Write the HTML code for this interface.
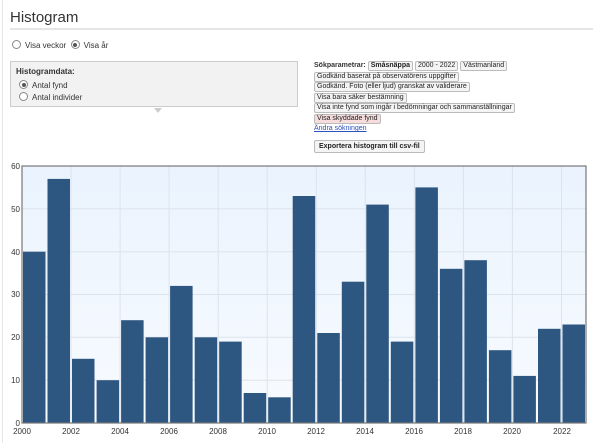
<!DOCTYPE html>
<html><head><meta charset="utf-8"><style>
*{margin:0;padding:0;box-sizing:border-box}
body{width:601px;height:443px;overflow:hidden;background:#fff;font-family:"Liberation Sans",sans-serif;position:relative}
.lb{position:absolute;left:2px;top:0;width:1px;height:443px;background:#e6e6e6}
h1{position:absolute;left:10px;top:9px;font-size:15px;font-weight:normal;color:#333}
.ul{position:absolute;left:10px;top:28px;width:583px;height:2px;background:#e5e5e5}
.rad{display:inline-block;width:9px;height:9px;border:1px solid #888;border-radius:50%;vertical-align:-1px;margin-right:4px;background:#fff;position:relative}
.rad.on::after{content:"";position:absolute;left:1.5px;top:1.5px;width:4px;height:4px;border-radius:50%;background:#555}
.t{position:absolute;font-size:8px;color:#333}
.panel{position:absolute;left:10px;top:61px;width:288px;height:46px;background:#f2f2f2;border:1px solid #ccc}
.tri{position:absolute;left:154px;top:108px;width:0;height:0;border-left:4px solid transparent;border-right:4px solid transparent;border-top:5px solid #ccc}
.btn{display:inline-block;border:1px solid #bbb;border-radius:2px;background:#f4f4f4;font-size:7px;color:#222;padding:0 2px;line-height:8px;height:10px;vertical-align:top}
.row{position:absolute;left:314px;font-size:7px;line-height:10px;height:10px;white-space:nowrap}
</style></head><body>
<div class="lb"></div>
<h1>Histogram</h1>
<div class="ul"></div>
<div class="t" style="left:12px;top:40px"><span class="rad"></span>Visa veckor &nbsp;<span class="rad on"></span>Visa år</div>
<div class="panel">
<div class="t" style="left:5px;top:5px;font-weight:bold">Histogramdata:</div>
<div class="t" style="left:8px;top:18px"><span class="rad on"></span>Antal fynd</div>
<div class="t" style="left:8px;top:30px"><span class="rad"></span>Antal individer</div>
</div>
<div class="tri"></div>
<div class="row" style="top:61px"><span style="font-weight:bold;color:#333">Sökparametrar:</span> <span class="btn" style="font-weight:bold">Småsnäppa</span> <span class="btn">2000 - 2022</span> <span class="btn">Västmanland</span></div>
<div class="row" style="top:71.5px"><span class="btn">Godkänd baserat på observatörens uppgifter</span></div>
<div class="row" style="top:82px"><span class="btn">Godkänd. Foto (eller ljud) granskat av validerare</span></div>
<div class="row" style="top:92.5px"><span class="btn">Visa bara säker bestämning</span></div>
<div class="row" style="top:103px"><span class="btn">Visa inte fynd som ingår i bedömningar och sammanställningar</span></div>
<div class="row" style="top:113.5px"><span class="btn" style="background:#f6dcdc">Visa skyddade fynd</span></div>
<div class="row" style="top:124px;color:#2a52be;text-decoration:underline">Ändra sökningen</div>
<div class="row" style="top:140px;height:13px"><span class="btn" style="font-weight:bold;height:13px;line-height:11px;padding:0 4px">Exportera histogram till csv-fil</span></div>
<svg style="position:absolute;left:0;top:0" width="601" height="443">
<defs><linearGradient id="g" x1="0" y1="0" x2="0" y2="1"><stop offset="0" stop-color="#eaf3fe"/><stop offset="1" stop-color="#f8fbff"/></linearGradient></defs>
<rect x="22" y="166" width="564" height="257" fill="url(#g)"/>
<g stroke="#dde3ea" stroke-width="1">
<line x1="22" x2="586" y1="208.8" y2="208.8"/><line x1="22" x2="586" y1="251.7" y2="251.7"/><line x1="22" x2="586" y1="294.5" y2="294.5"/><line x1="22" x2="586" y1="337.3" y2="337.3"/><line x1="22" x2="586" y1="380.2" y2="380.2"/>
<line y1="166" y2="423" x1="71" x2="71"/><line y1="166" y2="423" x1="120.1" x2="120.1"/><line y1="166" y2="423" x1="169.1" x2="169.1"/><line y1="166" y2="423" x1="218.2" x2="218.2"/><line y1="166" y2="423" x1="267.2" x2="267.2"/><line y1="166" y2="423" x1="316.3" x2="316.3"/><line y1="166" y2="423" x1="365.3" x2="365.3"/><line y1="166" y2="423" x1="414.4" x2="414.4"/><line y1="166" y2="423" x1="463.4" x2="463.4"/><line y1="166" y2="423" x1="512.4" x2="512.4"/><line y1="166" y2="423" x1="561.5" x2="561.5"/>
</g>
<g fill="#2d5780">
<rect x="23" y="251.7" width="22.5" height="171.3"/>
<rect x="47.5" y="178.9" width="22.5" height="244.1"/>
<rect x="72" y="358.8" width="22.5" height="64.2"/>
<rect x="96.6" y="380.2" width="22.5" height="42.8"/>
<rect x="121.1" y="320.2" width="22.5" height="102.8"/>
<rect x="145.6" y="337.3" width="22.5" height="85.7"/>
<rect x="170.1" y="285.9" width="22.5" height="137.1"/>
<rect x="194.7" y="337.3" width="22.5" height="85.7"/>
<rect x="219.2" y="341.6" width="22.5" height="81.4"/>
<rect x="243.7" y="393" width="22.5" height="30"/>
<rect x="268.2" y="397.3" width="22.5" height="25.7"/>
<rect x="292.7" y="196" width="22.5" height="227"/>
<rect x="317.3" y="333" width="22.5" height="90"/>
<rect x="341.8" y="281.7" width="22.5" height="141.3"/>
<rect x="366.3" y="204.6" width="22.5" height="218.4"/>
<rect x="390.8" y="341.6" width="22.5" height="81.4"/>
<rect x="415.4" y="187.4" width="22.5" height="235.6"/>
<rect x="439.9" y="268.8" width="22.5" height="154.2"/>
<rect x="464.4" y="260.2" width="22.5" height="162.8"/>
<rect x="488.9" y="350.2" width="22.5" height="72.8"/>
<rect x="513.4" y="375.9" width="22.5" height="47.1"/>
<rect x="538" y="328.8" width="22.5" height="94.2"/>
<rect x="562.5" y="324.5" width="22.5" height="98.5"/>
</g>
<rect x="22" y="166" width="564" height="257" fill="none" stroke="#777" stroke-width="1.2"/>
<g font-family="Liberation Sans" font-size="8" fill="#333" text-anchor="end">
<text x="20" y="169">60</text><text x="20" y="212">50</text><text x="20" y="255">40</text><text x="20" y="297">30</text><text x="20" y="340">20</text><text x="20" y="383">10</text><text x="20" y="426">0</text>
</g>
<g font-family="Liberation Sans" font-size="8" fill="#333" text-anchor="middle">
<text x="22" y="434">2000</text><text x="71" y="434">2002</text><text x="120" y="434">2004</text><text x="169" y="434">2006</text><text x="218" y="434">2008</text><text x="267" y="434">2010</text><text x="316" y="434">2012</text><text x="365" y="434">2014</text><text x="414" y="434">2016</text><text x="463" y="434">2018</text><text x="512" y="434">2020</text><text x="562" y="434">2022</text>
</g>
</svg>
</body></html>
